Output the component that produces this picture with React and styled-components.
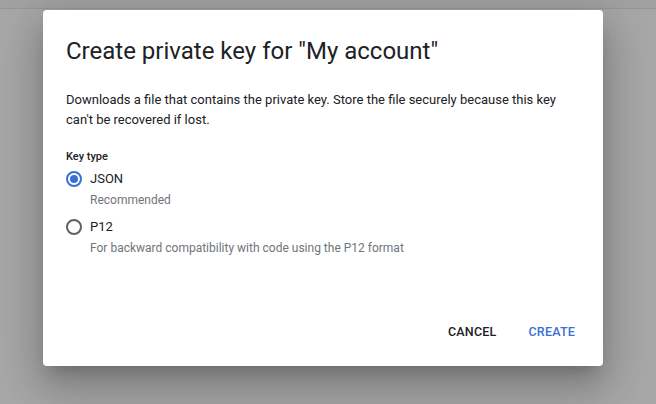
import React, { useState } from "react";
import styled, { createGlobalStyle } from "styled-components";

const GlobalStyle = createGlobalStyle`
  html, body {
    margin: 0;
    padding: 0;
    background: #a7a7a7;
    font-family: Roboto, "Noto Sans", Arial, sans-serif;
    -webkit-font-smoothing: antialiased;
  }
`;

const Page = styled.div`
  width: 656px;
  height: 404px;
  overflow: hidden;
  position: relative;
`;

const TopStrip = styled.div`
  height: 8px;
  background: #a1a1a1;
  border-bottom: 1px solid #959595;
`;

const Dialog = styled.div`
  width: 560px;
  margin: 1px 0 0 43px;
  background: #fff;
  border-radius: 4px;
  box-shadow: 0 11px 15px -7px rgba(0, 0, 0, 0.2),
    0 24px 38px 3px rgba(0, 0, 0, 0.14), 0 9px 46px 8px rgba(0, 0, 0, 0.12);
  display: flex;
  flex-direction: column;
`;

const Title = styled.h2`
  margin: 0;
  padding: 25px 24px 0 23px;
  font-size: 24px;
  line-height: 32px;
  font-weight: 400;
  color: #202124;
`;

const Body = styled.div`
  padding: 23px 24px 0 23px;
`;

const Description = styled.p`
  margin: 0;
  font-size: 13px;
  line-height: 20px;
  color: #202124;
`;

const FieldLabel = styled.div`
  margin-top: 19px;
  font-size: 11px;
  line-height: 16px;
  font-weight: 500;
  color: #202124;
`;

const Option = styled.label`
  display: grid;
  grid-template-columns: 16px 1fr;
  column-gap: 8px;
  align-items: center;
  margin-top: ${(p) => p.$gap}px;
  cursor: pointer;
`;

const Circle = styled.span`
  box-sizing: border-box;
  width: 16px;
  height: 16px;
  border-radius: 50%;
  border: 2px solid ${(p) => (p.$checked ? "#3a6fd8" : "#616161")};
  display: flex;
  align-items: center;
  justify-content: center;

  &::after {
    content: "";
    width: 8px;
    height: 8px;
    border-radius: 50%;
    background: ${(p) => (p.$checked ? "#3a6fd8" : "transparent")};
  }
`;

const OptionName = styled.span`
  font-size: 13px;
  line-height: 20px;
  color: #202124;
`;

const Hint = styled.span`
  grid-column: 2;
  margin-top: 1px;
  font-size: 12px;
  line-height: 20px;
  color: #70757a;
`;

const Actions = styled.div`
  display: flex;
  justify-content: flex-end;
  gap: 8px;
  padding: 55px 16px 17px;
`;

const Button = styled.button`
  border: none;
  background: transparent;
  font-family: inherit;
  font-size: 12.5px;
  font-weight: 500;
  letter-spacing: 0.2px;
  text-transform: uppercase;
  color: ${(p) => (p.$primary ? "#3a6fd8" : "#202124")};
  padding: 0 12px;
  height: 36px;
  min-width: 64px;
  border-radius: 4px;
  cursor: pointer;
`;

const types = [
  { id: "json", name: "JSON", hint: "Recommended" },
  {
    id: "p12",
    name: "P12",
    hint: "For backward compatibility with code using the P12 format",
  },
];

export default function App() {
  const [keyType, setKeyType] = useState("json");
  return (
    <Page>
      <GlobalStyle />
      <TopStrip />
      <Dialog>
        <Title>Create private key for "My account"</Title>
        <Body>
          <Description>
            Downloads a file that contains the private key. Store the file
            securely because this key can't be recovered if lost.
          </Description>
          <FieldLabel>Key type</FieldLabel>
          {types.map((t, i) => (
            <Option
              key={t.id}
              $gap={i === 0 ? 4 : 7}
              onClick={() => setKeyType(t.id)}
            >
              <Circle $checked={keyType === t.id} />
              <OptionName>{t.name}</OptionName>
              <Hint>{t.hint}</Hint>
            </Option>
          ))}
        </Body>
        <Actions>
          <Button>Cancel</Button>
          <Button $primary>Create</Button>
        </Actions>
      </Dialog>
    </Page>
  );
}
